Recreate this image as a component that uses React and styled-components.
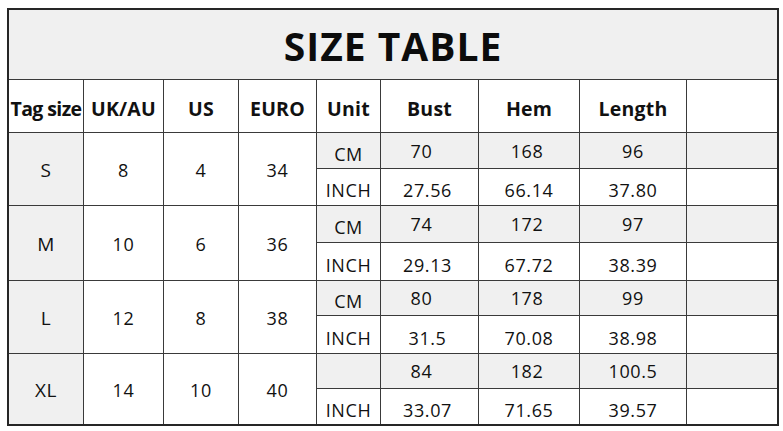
import React from "react";
import styled, { createGlobalStyle } from "styled-components";

const GlobalStyle = createGlobalStyle`
  html, body {
    margin: 0;
    padding: 0;
    background: #ffffff;
  }
  body {
    font-family: "Open Sans", "Noto Sans", "Liberation Sans", sans-serif;
    color: #111111;
  }
`;

const Wrapper = styled.div`
  padding: 8px 0 0 7px;
  width: 783px;
  height: 431px;
  box-sizing: border-box;
`;

const SizeGrid = styled.div`
  display: grid;
  width: 772px;
  box-sizing: border-box;
  grid-template-columns: 74px 79px 74px 77px 63px 97px 100px 106px 90px;
  grid-template-rows: 69px 52px 35px 36px 36px 37px 34px 37px 34px 35px;
  gap: 1px;
  background: #3a3a3a;
  border: 2px solid #262626;
`;

const Cell = styled.div`
  display: flex;
  align-items: center;
  justify-content: center;
  background: ${({ $shade }) => ($shade ? "#f0f0f0" : "#ffffff")};
  font-size: 18px;
  letter-spacing: 0.6px;
  line-height: 1;
  white-space: nowrap;
  padding-top: ${({ $low }) => ($low ? "6px" : "0")};
  padding-right: ${({ $shift }) => ($shift ? `${$shift}px` : "0")};
  box-sizing: border-box;
`;

const TitleCell = styled(Cell)`
  grid-column: 1 / -1;
  background: #f0f0f0;
  font-size: 39px;
  font-weight: 700;
  color: #0c0c0c;
  padding-top: 2px;
  letter-spacing: 1px;
`;

const HeadCell = styled(Cell)`
  font-size: 19.5px;
  font-weight: 700;
  padding-top: 6px;
  letter-spacing: ${({ $tight }) => ($tight ? "-0.6px" : "0.2px")};
`;

const SpanCell = styled(Cell)`
  grid-row: span 2;
  font-size: ${({ $size }) => ($size ? "19px" : "18px")};
  font-weight: ${({ $size }) => ($size ? 500 : 400)};
  padding-top: 2px;
`;

const headers = ["Tag size", "UK/AU", "US", "EURO", "Unit", "Bust", "Hem", "Length", ""];

const sizes = [
  {
    tag: "S", uk: "8", us: "4", euro: "34",
    cm: ["CM", "70", "168", "96"],
    inch: ["INCH", "27.56", "66.14", "37.80"],
  },
  {
    tag: "M", uk: "10", us: "6", euro: "36",
    cm: ["CM", "74", "172", "97"],
    inch: ["INCH", "29.13", "67.72", "38.39"],
  },
  {
    tag: "L", uk: "12", us: "8", euro: "38",
    cm: ["CM", "80", "178", "99"],
    inch: ["INCH", "31.5", "70.08", "38.98"],
  },
  {
    tag: "XL", uk: "14", us: "10", euro: "40",
    cm: ["", "84", "182", "100.5"],
    inch: ["INCH", "33.07", "71.65", "39.57"],
  },
];

// values in the bust column sit a little left of centre in the original
const cmShifts = [0, 16, 4, 0];
const inchShifts = [0, 4, 0, 0];

function MeasureRow({ values, shade, low, shifts }) {
  return (
    <>
      {values.map((v, i) => (
        <Cell key={i} $shade={shade} $low={low || (i === 0 && shade)} $shift={shifts[i]}>
          {v}
        </Cell>
      ))}
      <Cell $shade={shade} />
    </>
  );
}

export default function App() {
  return (
    <Wrapper>
      <GlobalStyle />
      <SizeGrid>
        <TitleCell>SIZE TABLE</TitleCell>
        {headers.map((h, i) => (
          <HeadCell key={i} $tight={i === 0}>
            {h}
          </HeadCell>
        ))}
        {sizes.map((s) => (
          <React.Fragment key={s.tag}>
            <SpanCell $shade $size>
              {s.tag}
            </SpanCell>
            <SpanCell>{s.uk}</SpanCell>
            <SpanCell>{s.us}</SpanCell>
            <SpanCell>{s.euro}</SpanCell>
            <MeasureRow values={s.cm} shade shifts={cmShifts} />
            <MeasureRow values={s.inch} low shifts={inchShifts} />
          </React.Fragment>
        ))}
      </SizeGrid>
    </Wrapper>
  );
}
